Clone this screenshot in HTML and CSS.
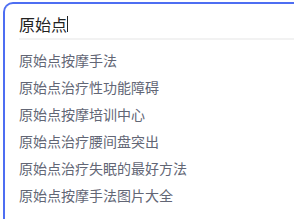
FILE: index.html
```html
<!DOCTYPE html>
<html lang="zh-CN">
	<head>
		<meta charset="UTF-8" />
		<meta name="viewport" content="width=device-width, initial-scale=1.0" />
		<title>搜索</title>
		<link rel="stylesheet" href="styles.css">
	</head>
	<body>
		<div class="search-box">
			<div class="search-input">
				<span class="query">原始点</span><span class="caret"></span>
			</div>
			<ul class="suggestions">
				<li>原始点按摩手法</li>
				<li>原始点治疗性功能障碍</li>
				<li>原始点按摩培训中心</li>
				<li>原始点治疗腰间盘突出</li>
				<li>原始点治疗失眠的最好方法</li>
				<li>原始点按摩手法图片大全</li>
			</ul>
		</div>
	</body>
</html>
```

FILE: styles.css
```css
body {
	margin: 0;
	padding: 2px 0 0 3px;
	background-color: #fff;
	font-family: "Noto Sans CJK SC", "Noto Sans", sans-serif;
	overflow: hidden;
	height: 219px;
	box-sizing: border-box;
}

.search-box {
	border: 2px solid #4e6ef2;
	border-right: none;
	border-bottom: none;
	border-top-left-radius: 10px;
	height: 240px;
	padding-left: 14px;
}

.search-input {
	display: flex;
	align-items: center;
	box-sizing: border-box;
	height: 36px;
	padding-top: 5px;
	border-bottom: 2px solid #f2f2f2;
	font-size: 16px;
	color: #222;
}

.query {
	line-height: 20px;
}

.caret {
	width: 1px;
	height: 16px;
	background-color: #222;
}

.suggestions {
	list-style: none;
	margin: 0;
	padding: 7px 0 0;
}

.suggestions li {
	font-size: 14px;
	line-height: 27px;
	color: #626675;
}
```
